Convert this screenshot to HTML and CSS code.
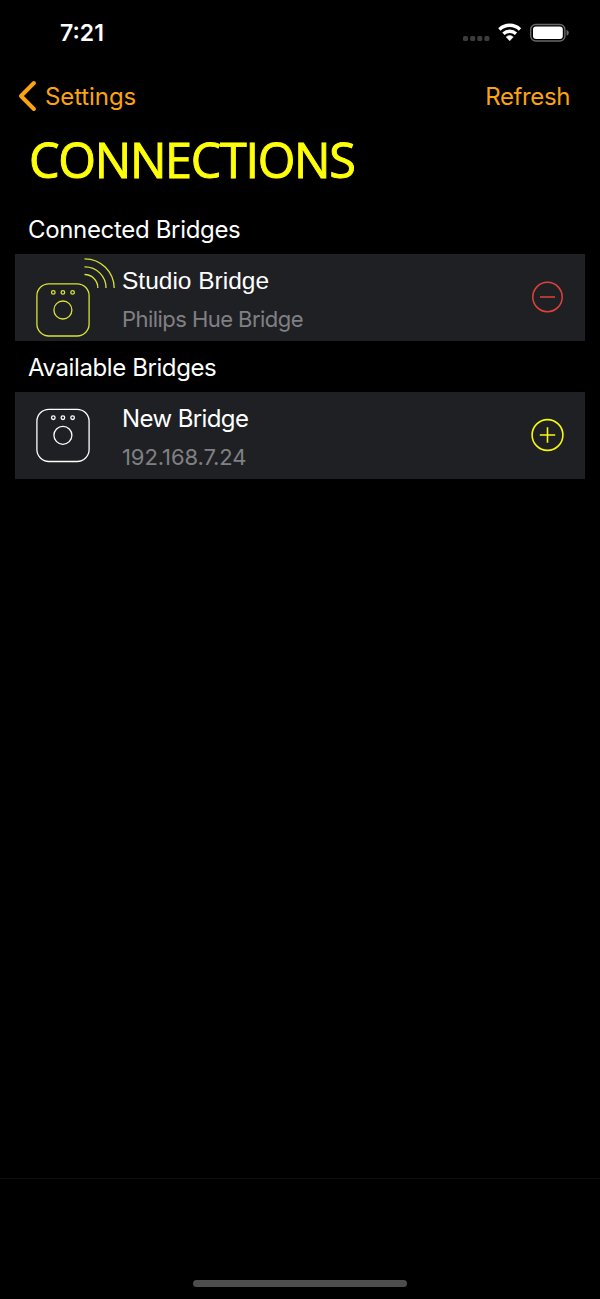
FILE: index.html
```html
<!DOCTYPE html>
<html lang="en">
<head>
  <title>Connections</title>
  <meta charset="UTF-8">
  <link rel="stylesheet" href="styles.css">
</head>
<body>
<div class="screen">
  <div class="status">
    <span class="time">7:21</span>
    <svg class="status-icons" width="108" height="22" viewBox="0 0 108 22">
      <g fill="#3c3c3d">
        <rect x="1" y="14" width="5" height="5" rx="1.5"/>
        <rect x="8.2" y="14" width="5" height="5" rx="1.5"/>
        <rect x="15.3" y="14" width="5" height="5" rx="1.5"/>
        <rect x="22.4" y="14" width="5" height="5" rx="1.5"/>
      </g>
      <g fill="none" stroke="#fff" stroke-width="3.4">
        <path d="M37.4 7.4a15 15 0 0 1 20.6 0"/>
        <path d="M41.4 11.7a9.4 9.4 0 0 1 12.6 0"/>
      </g>
      <path d="M44.1 14.9a5.6 5.6 0 0 1 7.2 0L47.7 18.8z" fill="#fff" stroke="#fff" stroke-width=".5"/>
      <rect x="68.7" y="2.5" width="34.2" height="16.5" rx="5" fill="none" stroke="#68686a" stroke-width="1.4"/>
      <rect x="71" y="4.6" width="29.8" height="12.3" rx="3" fill="#fff"/>
      <path d="M104.5 8c3 .8 3 4.8 0 5.6z" fill="#68686a"/>
    </svg>
  </div>

  <div class="navbar">
    <a class="back">
      <svg width="20" height="32" viewBox="0 0 20 32">
        <path d="M16.9 3L4 16l12.9 13" fill="none" stroke="currentColor" stroke-width="4" stroke-linecap="round" stroke-linejoin="round"/>
      </svg>
      <span class="back-text">Settings</span>
    </a>
    <a class="refresh">Refresh</a>
  </div>

  <h1 class="title">CONNECTIONS</h1>

  <h2 class="heading">Connected Bridges</h2>
  <div class="row row-connected">
    <svg class="bridge" width="82" height="87" viewBox="0 0 82 87" fill="none" stroke="currentColor" stroke-width="1.3">
      <rect x="1.9" y="29.8" width="52.2" height="52.2" rx="12"/>
      <circle cx="18.3" cy="38.4" r="1.8"/>
      <circle cx="27.9" cy="38.4" r="1.8"/>
      <circle cx="37.6" cy="38.4" r="1.8"/>
      <circle cx="27.9" cy="56" r="9"/>
      <path d="M49.5 20.5A13.3 13.3 0 0 1 62.8 34M49.5 12.9A21 21 0 0 1 71 34M49.5 4.8A29.5 29.5 0 0 1 79.2 34"/>
    </svg>
    <div class="info">
      <p class="name name-connected">Studio Bridge</p>
      <p class="detail">Philips Hue Bridge</p>
    </div>
    <svg class="action remove" width="34" height="34" viewBox="0 0 34 34" fill="none" stroke="currentColor" stroke-width="1.5">
      <circle cx="17.5" cy="17" r="14.7"/>
      <path d="M10 17h15"/>
    </svg>
  </div>

  <h2 class="heading heading-available">Available Bridges</h2>
  <div class="row">
    <svg class="bridge" width="82" height="87" viewBox="0 0 82 87" fill="none" stroke="currentColor" stroke-width="1.3">
      <rect x="1.9" y="17.3" width="52.2" height="52.2" rx="12"/>
      <circle cx="18.3" cy="25.7" r="1.8"/>
      <circle cx="27.9" cy="25.7" r="1.8"/>
      <circle cx="37.6" cy="25.7" r="1.8"/>
      <circle cx="27.9" cy="43.3" r="9"/>
    </svg>
    <div class="info">
      <p class="name">New Bridge</p>
      <p class="detail detail-ip">192.168.7.24</p>
    </div>
    <svg class="action add" width="34" height="34" viewBox="0 0 34 34" fill="none" stroke="currentColor" stroke-width="1.6">
      <circle cx="17.5" cy="17" r="15.4"/>
      <path d="M9.8 17h15.4M17.5 9.3v15.4"/>
    </svg>
  </div>

  <div class="toolbar">
    <div class="home-indicator"></div>
  </div>
</div>
</body>
</html>
```
FILE: styles.css
```css
body {
  margin: 0;
  background: #000;
  color: #fff;
  font-family: Inter, "Liberation Sans", sans-serif;
}

p,
h1,
h2 {
  margin: 0;
  font-weight: 400;
}

svg {
  display: block;
  flex-shrink: 0;
}

.screen {
  display: flex;
  flex-direction: column;
  height: 1299px;
  overflow: hidden;
}

.status {
  display: flex;
  justify-content: space-between;
  align-items: center;
  height: 66px;
  padding: 0 30px 0 60px;
}

.time {
  font-size: 23px;
  font-weight: 600;
}

.navbar {
  display: flex;
  justify-content: space-between;
  align-items: center;
  height: 60px;
  padding: 0 30px 0 17px;
  color: #fca311;
  font-size: 24px;
}

.back {
  display: flex;
  align-items: center;
  gap: 8px;
}

.back-text {
  letter-spacing: -0.1px;
}

.refresh {
  letter-spacing: -0.4px;
}

.title {
  height: 68px;
  padding-left: 29px;
  color: #ffff0a;
  font-family: "Open Sans", sans-serif;
  font-size: 48.5px;
  letter-spacing: -1.3px;
  line-height: 67px;
  -webkit-text-stroke: 0.9px #ffff0a;
}

.heading {
  height: 60px;
  padding-left: 28px;
  font-size: 24px;
  letter-spacing: -0.33px;
  line-height: 72px;
}

.heading-available {
  height: 51px;
  letter-spacing: -0.4px;
  line-height: 54px;
}

.row {
  display: flex;
  align-items: center;
  height: 87px;
  margin: 0 15px;
  padding: 0 21px 0 20px;
  background: #1f2023;
}

.bridge {
  color: #fff;
}

.row-connected .bridge {
  color: #d9e237;
}

.info {
  flex: 1;
  padding: 5px 0 0 5px;
}

.name {
  font-size: 24px;
  letter-spacing: -0.6px;
  line-height: 38px;
}

.name-connected {
  font-family: "Liberation Sans", Arial, sans-serif;
  font-size: 24.5px;
  letter-spacing: 0;
}

.detail {
  color: #808084;
  font-size: 22px;
  letter-spacing: -0.55px;
  line-height: 38px;
}

.detail-ip {
  letter-spacing: -0.1px;
}

.action {
  padding-bottom: 1px;
}

.remove {
  color: #e0423a;
}

.add {
  color: #f8f80c;
}

.toolbar {
  display: flex;
  justify-content: center;
  align-items: flex-end;
  height: 120px;
  margin-top: auto;
  border-top: 1px solid #101010;
}

.home-indicator {
  width: 214px;
  height: 7px;
  margin-bottom: 12px;
  border-radius: 4px;
  background: #4d4d4d;
}
```
